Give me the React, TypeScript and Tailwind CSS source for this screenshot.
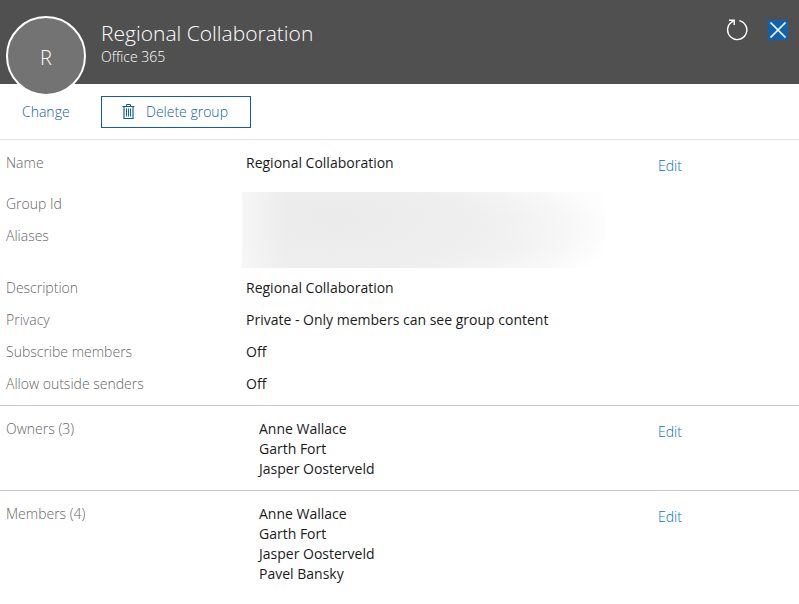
import type { ReactNode } from "react";

const sectionClass =
  "grid grid-cols-[240px_minmax(0,1fr)_135px] px-1.5 pt-[13px] pb-[11px]";
const labelClass = "font-light text-[#666666]";

function TrashIcon() {
  return (
    <svg width="14" height="16" viewBox="0 0 14 16" fill="none" stroke="#0f5fa8" aria-hidden="true">
      <path d="M0.5 2.5h12M4.5 2.5v-2h4v2" strokeWidth="1" />
      <path d="M2 2.5v12h9v-12" strokeWidth="1.2" />
      <path d="M4.5 4.5v8M6.5 4.5v8M8.5 4.5v8" strokeWidth="1" />
    </svg>
  );
}

function RefreshIcon() {
  return (
    <svg width="22" height="22" viewBox="0 0 22 22" fill="none" stroke="#ffffff" strokeWidth="1.4" aria-hidden="true">
      <path d="M13.3 1.6A9.6 9.6 0 1 1 6 2.9L7.6 1.6" />
      <path d="M3 1.2h5.2v4.8" />
    </svg>
  );
}

function CloseIcon() {
  return (
    <svg width="20" height="20" viewBox="0 0 20 20" fill="none" stroke="#ffffff" strokeWidth="1.7" aria-hidden="true">
      <path d="M2.5 2.5l15 15M17.5 2.5l-15 15" />
    </svg>
  );
}

function EditLink({ label }: { label: string }) {
  return (
    <a href="#edit" aria-label={label} className="mt-[3px] self-start justify-self-start font-light text-[#0072c6]">
      Edit
    </a>
  );
}

function Field({ label, children }: { label: string; children: ReactNode }) {
  return (
    <div className="col-span-2 grid grid-cols-subgrid">
      <dt className={labelClass}>{label}</dt>
      <dd className="text-[#1a1a1a]">{children}</dd>
    </div>
  );
}

function People({ title, names, edit }: { title: string; names: string[]; edit: string }) {
  return (
    <section className={sectionClass}>
      <h2 className={labelClass}>{title}</h2>
      <ul className="pl-[13px] text-[#1a1a1a]">
        {names.map((name) => (
          <li key={name}>{name}</li>
        ))}
      </ul>
      <EditLink label={edit} />
    </section>
  );
}

export default function App() {
  return (
    <div className="min-h-screen bg-white font-['Open_Sans','Noto_Sans',sans-serif] text-sm leading-5">
      <header className="flex h-[84px] items-start bg-[#505050] pl-1.5 text-white">
        <div className="z-10 mt-4 flex size-20 shrink-0 items-center justify-center rounded-full border-2 border-white bg-[#737373] pt-1 text-xl font-light">
          R
        </div>
        <div className="ml-[15px] min-w-0 flex-1 pt-[19px]">
          <h1 className="text-[21px] leading-7 font-light">Regional Collaboration</h1>
          <p className="font-light">Office 365</p>
        </div>
        <div className="flex gap-5 pt-5 pr-[11px]">
          <button type="button" aria-label="Refresh" className="flex h-5 w-[22px] items-center justify-center">
            <RefreshIcon />
          </button>
          <button type="button" aria-label="Close" className="flex size-5 items-center justify-center bg-[#0f62ac]">
            <CloseIcon />
          </button>
        </div>
      </header>

      <div className="flex items-center border-b border-[#e3e3e3] pt-3 pb-[11px] font-light text-[#0f5fa8]">
        <a href="#change" className="w-[101px] pl-[22px]">
          Change
        </a>
        <button type="button" className="flex h-8 w-[150px] items-center gap-2.5 border border-[#0f5fa8] pl-5">
          <TrashIcon />
          Delete group
        </button>
      </div>

      <section className={sectionClass}>
        <dl className="col-span-2 grid grid-cols-subgrid">
          <Field label="Name">Regional Collaboration</Field>
          <div className="col-span-2 mt-[19px] mb-2.5 grid grid-cols-subgrid">
            <dt className={"flex flex-col gap-3 pt-0.5 " + labelClass}>
              <span>Group Id</span>
              <span>Aliases</span>
            </dt>
            <dd className="-ml-1 h-[76px] w-[364px] bg-[linear-gradient(90deg,#ffffff80_0%,#ffffff40_5%,#ffffff00_12%),radial-gradient(ellipse_290px_110px_at_25%_35%,#ebebeb_0%,#ededed_30%,#eeeeee80_65%,#ffffff00_100%),radial-gradient(ellipse_270px_70px_at_28%_56%,#eeeeee_0%,#f2f2f2_50%,#ffffff_100%)]" />
          </div>
          <div className="col-span-2 grid grid-cols-subgrid gap-y-3">
            <Field label="Description">Regional Collaboration</Field>
            <Field label="Privacy">Private - Only members can see group content</Field>
            <Field label="Subscribe members">Off</Field>
            <Field label="Allow outside senders">Off</Field>
          </div>
        </dl>
        <EditLink label="Edit details" />
      </section>

      <div className="divide-y divide-[#c8c8c8] border-t border-[#c8c8c8]">
        <People title="Owners (3)" names={["Anne Wallace", "Garth Fort", "Jasper Oosterveld"]} edit="Edit owners" />
        <People
          title="Members (4)"
          names={["Anne Wallace", "Garth Fort", "Jasper Oosterveld", "Pavel Bansky"]}
          edit="Edit members"
        />
      </div>
    </div>
  );
}
